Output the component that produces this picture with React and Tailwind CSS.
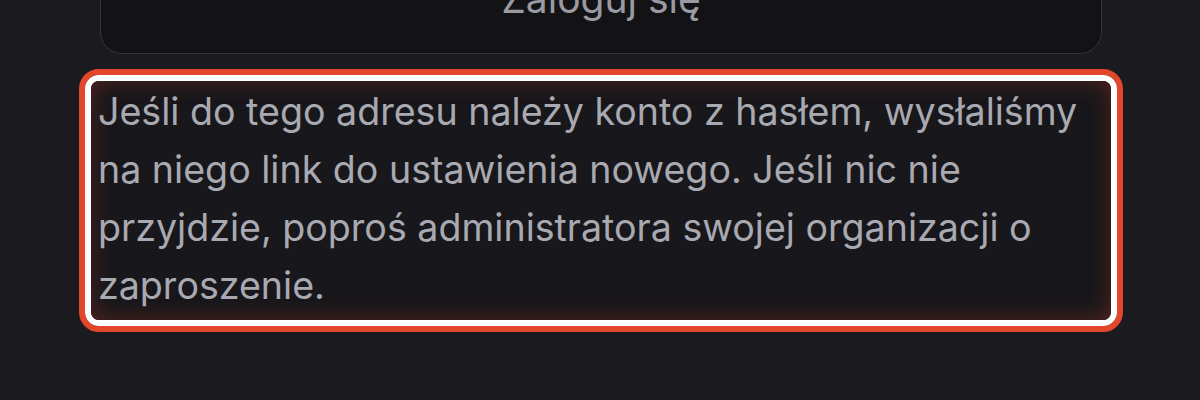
export default function App() {
  return (
    <div
      className="w-[1200px] h-[400px] overflow-hidden bg-[#1b1a1f]"
      style={{ fontFamily: "Inter, 'Noto Sans', sans-serif" }}
    >
      <div className="flex flex-col pl-[79px] pr-[77px]">
        <div className="mx-[21px] mt-[-57px] h-[111px] rounded-[22px] border-[1.5px] border-[#34343a] bg-[#131316] flex items-center justify-center">
          <span className="text-[39px] text-[#9a9aa2] leading-none">Zaloguj się</span>
        </div>
        <div className="mt-[15px] rounded-[20px] border-[6px] border-[#e2472b]">
          <div className="rounded-[14px] border-[6px] border-white">
            <div className="rounded-[8px] bg-[#18171b] shadow-[inset_0_0_22px_rgba(200,60,40,0.35)] pl-[7px] pr-[12px] pt-[2px] pb-[5px]">
              <p className="text-[37.6px] leading-[58px] text-[#a9a9b1]">
                Jeśli do tego adresu należy konto z hasłem, wysłaliśmy na niego link do ustawienia nowego. Jeśli nic nie przyjdzie, poproś administratora swojej organizacji o zaproszenie.
              </p>
            </div>
          </div>
        </div>
      </div>
    </div>
  );
}
